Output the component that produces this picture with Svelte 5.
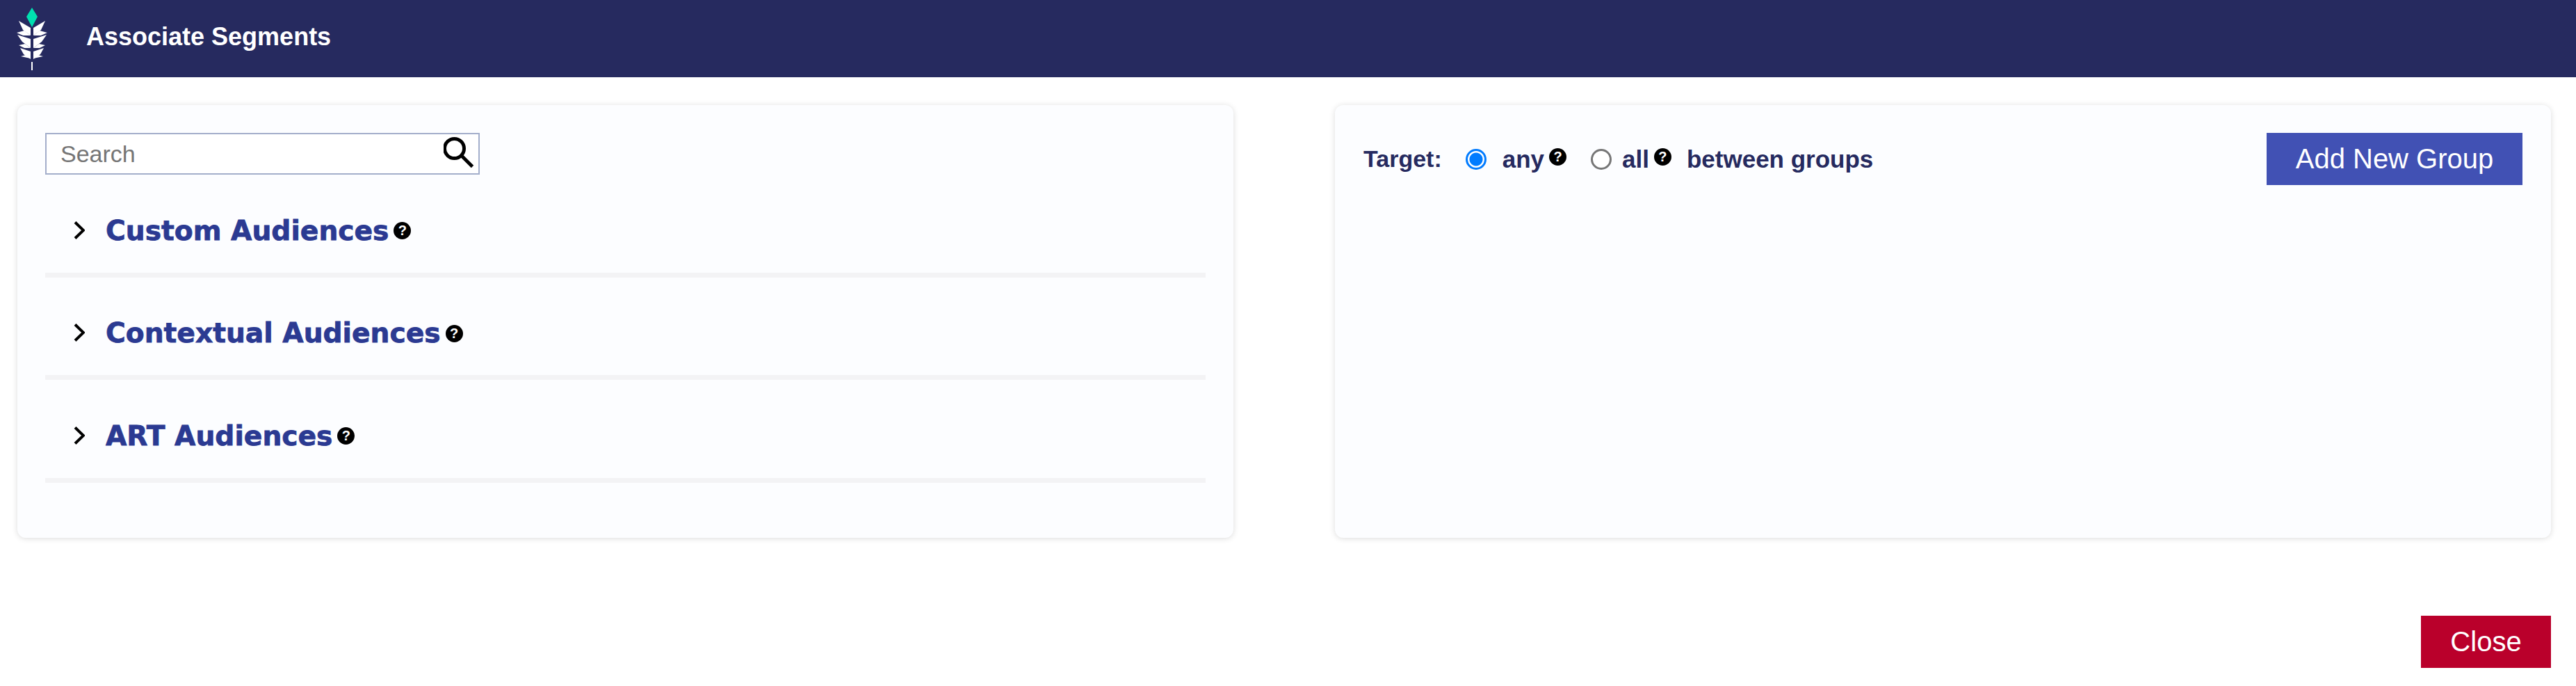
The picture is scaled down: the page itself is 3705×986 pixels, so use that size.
<script lang="ts">
  const audiences = ['Custom Audiences', 'Contextual Audiences', 'ART Audiences'];
</script>

<header class="topbar">
  <svg class="logo" viewBox="0 0 120 110" aria-hidden="true">
    <path class="gem" d="M46 11 L54 24 L46 39 L38 24 Z" />
    <g class="leaf">
      <path d="M27 30 L44 40 L44 51 L33 43 Z" />
      <path d="M65 30 L48 40 L48 51 L59 43 Z" />
      <path d="M24 47 L35 44 L44 51 L33 51 Z" />
      <path d="M68 47 L57 44 L48 51 L59 51 Z" />
      <path d="M25 50 L44 56 L44 69 L32 60 Z" />
      <path d="M67 50 L48 56 L48 69 L60 60 Z" />
      <path d="M27 65 L36 63 L44 69 L35 69 Z" />
      <path d="M65 65 L56 63 L48 69 L57 69 Z" />
      <path d="M29 69 L44 74 L44 85 L34 78 Z" />
      <path d="M63 69 L48 74 L48 85 L58 78 Z" />
      <path d="M30 81 L37 79 L44 84 Z" />
      <path d="M62 81 L55 79 L48 84 Z" />
      <rect x="45" y="89" width="2" height="12" />
    </g>
  </svg>
  <h1>Associate Segments</h1>
</header>

<main class="panels">
  <section class="card left">
    <div class="search">
      <input type="text" placeholder="Search" />
      <svg class="search-icon" viewBox="0 0 44 46" aria-hidden="true">
        <circle cx="15.5" cy="17.5" r="14" />
        <line x1="26" y1="28" x2="41.5" y2="43.5" />
      </svg>
    </div>
    {#each audiences as name}
      <div class="row">
        <svg class="chevron" viewBox="0 0 16 26" aria-hidden="true">
          <path d="M2 1.5 L14 13 L2 24.5" />
        </svg>
        <h2>{name}</h2>
        <span class="help">?</span>
      </div>
    {/each}
  </section>

  <section class="card right">
    <div class="target">
      <span class="label">Target:</span>
      <input class="radio first" type="radio" name="target" checked />
      <span class="opt">any</span>
      <span class="help">?</span>
      <input class="radio second" type="radio" name="target" />
      <span class="opt tight">all</span>
      <span class="help">?</span>
      <span class="opt after">between groups</span>
    </div>
    <button class="add">Add New Group</button>
  </section>
</main>

<footer class="actions">
  <button class="close">Close</button>
</footer>

<style>
  :global(body) {
    background: #fff;
    font-family: "Liberation Sans", Arial, sans-serif;
  }

  .topbar {
    height: 111px;
    background: #262a5f;
    display: flex;
    align-items: flex-start;
  }

  .logo {
    width: 120px;
    height: 110px;
    flex: none;
  }

  .gem {
    fill: #00e0b0;
  }

  .leaf {
    fill: #fff;
  }

  h1 {
    margin: 32px 0 0 4px;
    color: #fff;
    font-size: 36px;
    line-height: 42px;
    font-weight: 700;
  }

  .panels {
    display: grid;
    grid-template-columns: 1749px 1749px;
    gap: 146px;
    padding: 40px 36px 0 25px;
  }

  .card {
    height: 622px;
    box-sizing: border-box;
    background: #fcfdff;
    border-radius: 12px;
    box-shadow: 0 1px 8px rgba(0, 0, 0, 0.14);
  }

  .left {
    padding: 40px;
  }

  .search {
    position: relative;
    width: 625px;
    height: 60px;
  }

  .search input {
    width: 100%;
    height: 100%;
    box-sizing: border-box;
    border: 2px solid #a3aecb;
    background: #fff;
    padding: 0 20px;
    font-family: inherit;
    font-size: 34px;
    outline: none;
  }

  .search-icon {
    position: absolute;
    right: 8px;
    top: 5px;
    width: 44px;
    height: 46px;
    fill: none;
    stroke: #000;
    stroke-width: 5;
  }

  .row {
    box-sizing: border-box;
    border-bottom: 7px solid #f3f3f5;
    display: flex;
    align-items: center;
    padding: 56.5px 0 38px 41px;
  }

  .chevron {
    width: 16px;
    height: 26px;
    fill: none;
    stroke: #000;
    stroke-width: 4;
    margin-right: 30px;
  }

  h2 {
    margin: 0 0 -1px;
    padding-top: 1px;
    color: #2b3a92;
    font-family: "DejaVu Sans", sans-serif;
    font-size: 39.2px;
    line-height: 46px;
    font-weight: 700;
    -webkit-text-stroke: 0.8px #2b3a92;
  }

  .help {
    width: 25px;
    height: 25px;
    border-radius: 50%;
    background: #000;
    color: #fff;
    font-size: 20px;
    font-weight: 700;
    line-height: 25px;
    text-align: center;
    margin-left: 7px;
    flex: none;
  }

  .row .help {
    margin-top: 2px;
  }

  .right {
    padding: 40px 41px 40px 41px;
    display: flex;
    justify-content: space-between;
    align-items: flex-start;
  }

  .target {
    display: flex;
    align-items: center;
    height: 75px;
    color: #262a5f;
    font-size: 35px;
    font-weight: 700;
  }

  .label {
    font-size: 34px;
  }

  .radio {
    appearance: none;
    box-sizing: border-box;
    width: 30px;
    height: 30px;
    margin: 0;
    border: 3px solid #767676;
    border-radius: 50%;
    background: #fff;
  }

  .radio:checked {
    border-color: #007bff;
    background: radial-gradient(circle, #007bff 0 9px, #fff 10px);
  }

  .radio.first {
    margin-left: 34px;
  }

  .radio.second {
    margin-left: 35px;
  }

  .opt {
    margin-left: 23px;
  }

  .opt.tight {
    margin-left: 15px;
  }

  .opt.after {
    margin-left: 22px;
  }

  .target .help {
    margin-bottom: 6px;
  }

  button {
    border: none;
    color: #fff;
    font-family: inherit;
    font-size: 40px;
    height: 75px;
    padding: 0;
  }

  .add {
    width: 368px;
    background: #4151b4;
  }

  .actions {
    display: flex;
    justify-content: flex-end;
    padding: 112px 36px 0 0;
  }

  .close {
    width: 187px;
    background: #ba002b;
  }
</style>
